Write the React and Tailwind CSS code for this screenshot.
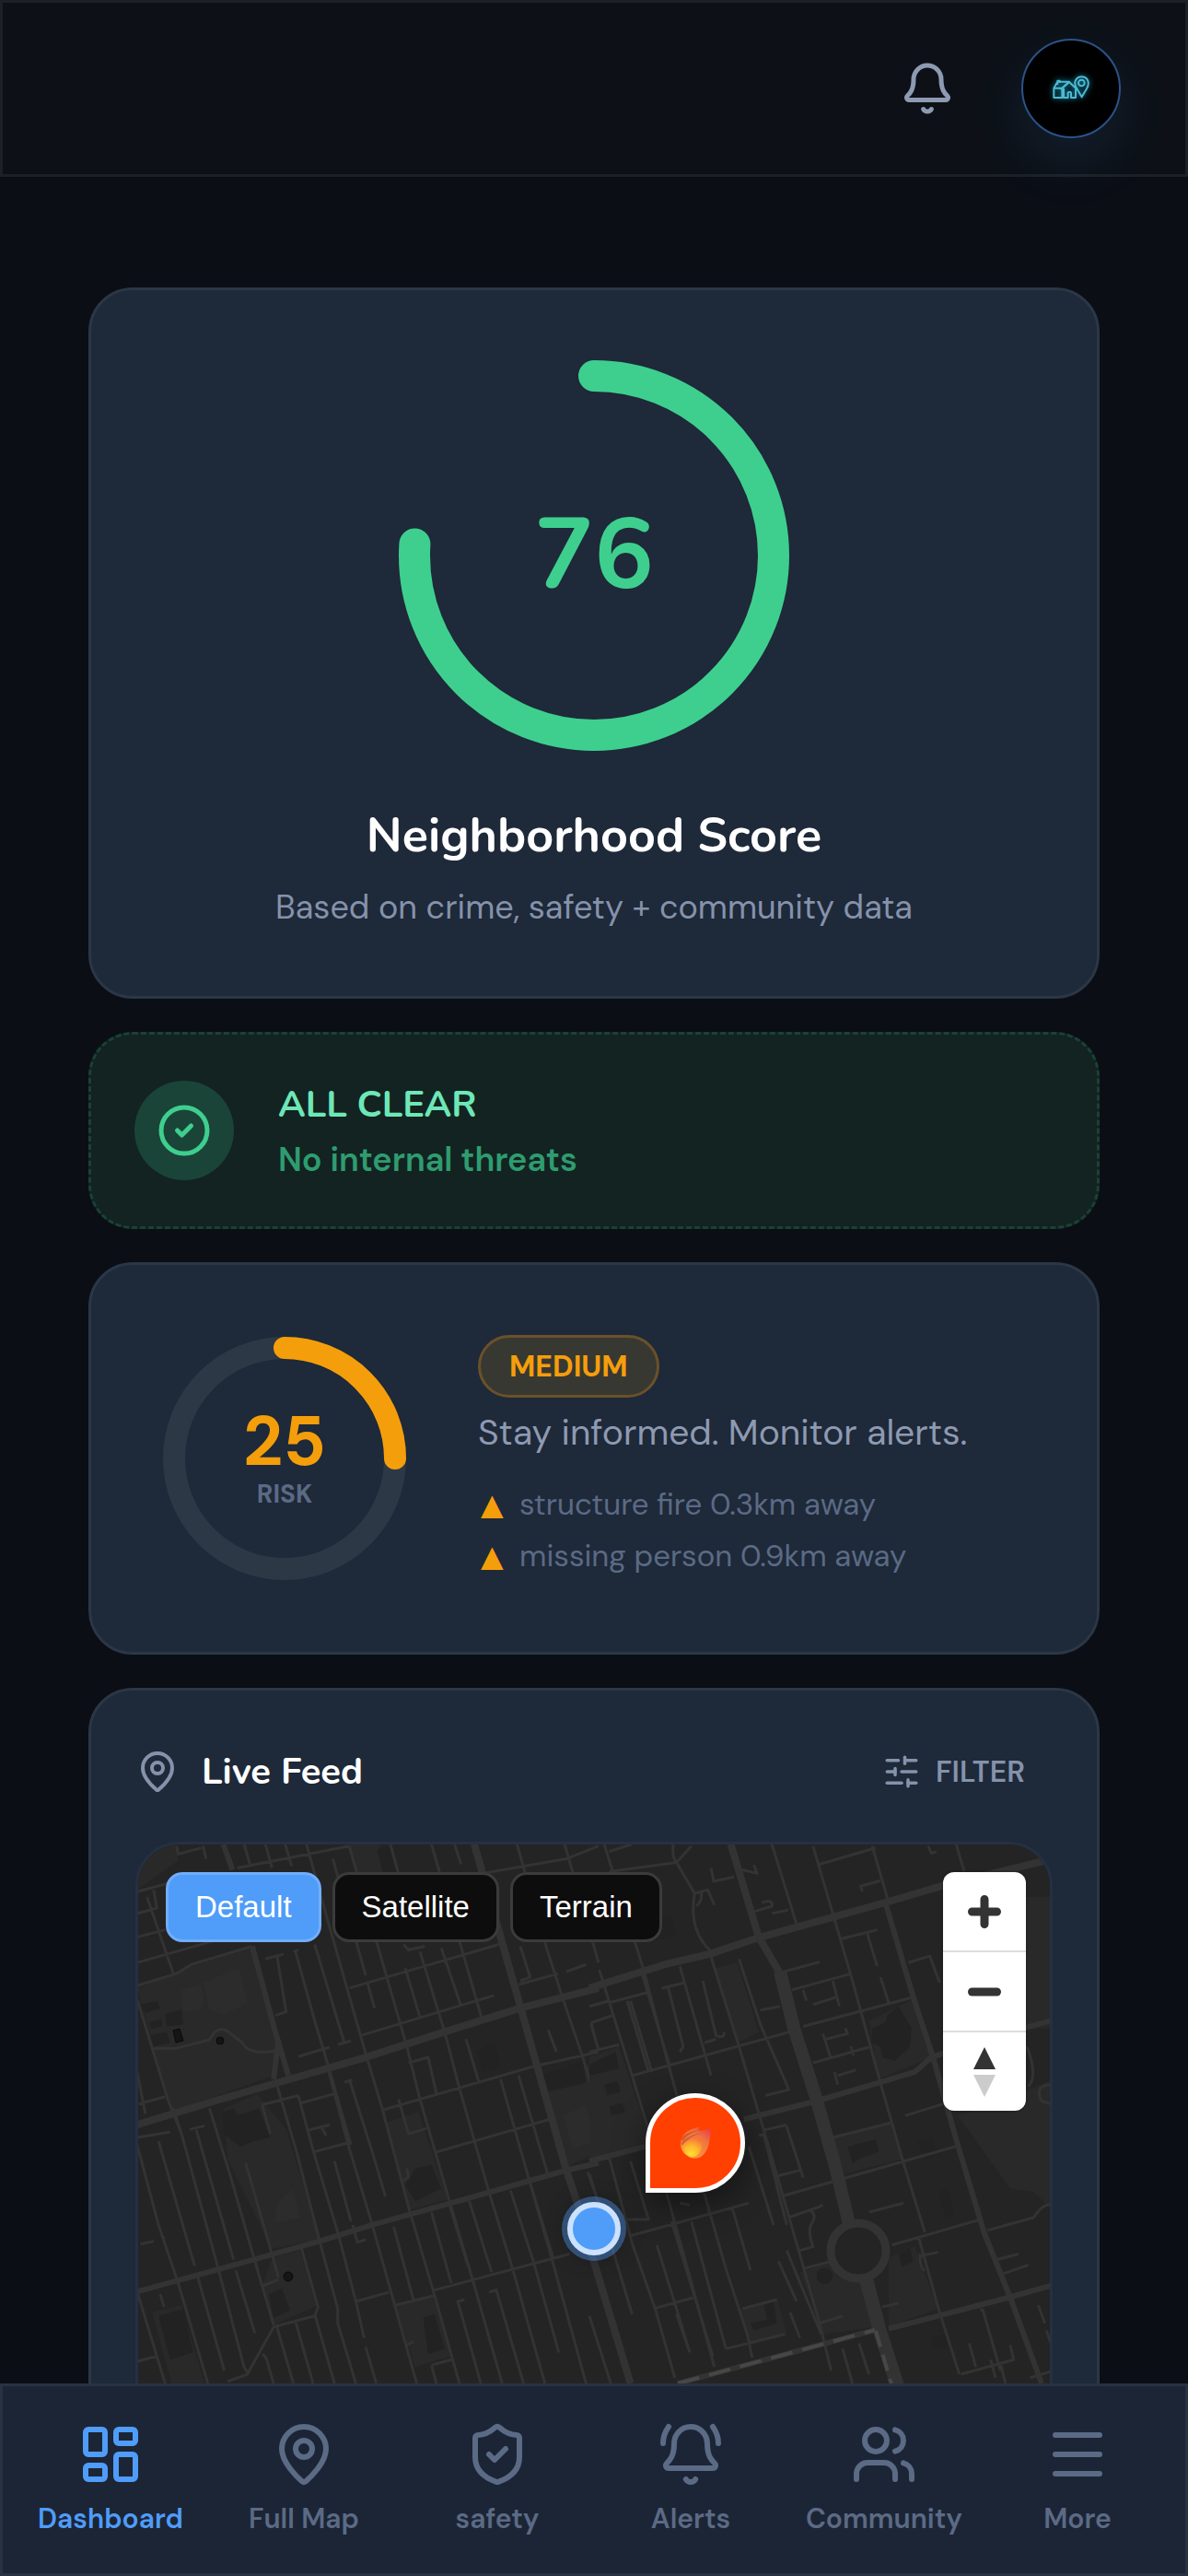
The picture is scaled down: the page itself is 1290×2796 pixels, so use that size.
import React, { useState } from 'react';
import {
  Bell,
  BellRing,
  CircleCheck,
  LayoutDashboard,
  MapPin,
  Menu,
  ShieldCheck,
  SlidersHorizontal,
  Users,
} from 'lucide-react';

const NAV_ITEMS = [
  { label: 'Dashboard', icon: LayoutDashboard },
  { label: 'Full Map', icon: MapPin },
  { label: 'safety', icon: ShieldCheck },
  { label: 'Alerts', icon: BellRing },
  { label: 'Community', icon: Users },
  { label: 'More', icon: Menu },
];

const MAP_STYLES = ['Default', 'Satellite', 'Terrain'];

const RISK_REASONS = ['structure fire 0.3km away', 'missing person 0.9km away'];

// Each tile has its own coordinate space, placed side by side in <MapCanvas />
const WEST_TILE = {
  parks: [
    'M165 450 L330 390 L515 340 L590 590 L580 690 L270 790 Z',
    'M430 780 L530 740 L620 840 L720 1140 L575 1165 L440 920 Z',
    'M575 1190 L660 1170 L715 1320 L580 1375 L545 1270 Z',
    'M920 820 L1020 790 L1110 1030 L990 1060 Z',
    'M950 1320 L1065 1300 L1120 1460 L1010 1490 Z',
    'M210 1340 L300 1320 L370 1535 L270 1535 Z',
    'M1400 700 L1568 650 V900 L1470 940 Z',
    'M810 55 H900 L925 150 L850 170 Z',
    'M165 55 H285 L290 100 L165 180 Z',
  ],
  buildings: [
    'M175 495 L225 485 L235 505 L190 518 Z M200 545 L238 535 L243 552 L210 562 Z M205 580 L255 570 L265 600 L215 610 Z M250 520 L300 510 L305 550 L255 555 Z',
    'M425 790 L460 780 L470 800 L535 780 L570 860 L520 870 L480 885 L450 865 L430 850 Z',
    'M980 990 L1010 945 L1060 935 L1090 1000 L1010 1035 Z',
    'M1035 1355 L1070 1345 L1100 1440 L1050 1455 Z',
    'M230 1350 L305 1330 L335 1450 L265 1470 Z',
    'M565 1290 L605 1275 L630 1335 L580 1355 Z',
    'M1395 690 L1520 650 L1530 710 L1410 735 Z',
    'M895 70 L930 60 L955 130 L915 145 Z M1200 620 L1250 600 L1270 665 L1215 680 Z',
  ],
  fields: [
    'M295 455 L360 438 L370 490 L350 512 L305 515 Z',
    'M365 435 L475 395 L500 490 L430 522 L385 510 Z',
    'M590 1040 L640 1000 L662 1080 L585 1095 Z',
    'M1460 800 L1530 770 L1560 870 L1490 890 Z',
  ],
  streets: [
    'M165 480 L260 760 L300 850 L410 1215',
    'M165 680 L190 795',
    'M165 880 L230 1100 L290 1260 L380 1535',
    'M230 870 L340 1213',
    'M345 840 L458 1195',
    'M275 780 L300 850',
    'M385 780 L450 970 L520 1190 L580 1375',
    'M495 930 L570 1165 L595 1245',
    'M590 360 L618 515 L585 525',
    'M555 370 L610 357 M640 350 L655 345',
    'M645 345 L705 540 L745 660 L815 880',
    'M705 330 L795 600',
    'M680 55 L740 250 L860 630 L910 780 L990 1050 L1065 1280 L1145 1535',
    'M590 715 L650 900 L720 1145 L775 1330 L775 1370 L830 1535',
    'M655 745 L700 895 L775 1120 L830 1310 L855 1410',
    'M745 670 L805 875 L880 1100 L945 1310 L1015 1535',
    'M810 700 L880 900 L920 1022',
    'M795 708 L820 702',
    'M810 60 L860 220 L985 610 L1025 755 L1110 1020 L1185 1250 L1275 1535',
    'M765 925 L815 1090',
    'M490 55 L508 110 M555 55 L575 120 M615 55 L635 115 M365 60 L375 95',
    'M760 95 L860 415 M865 435 L887 505',
    'M935 55 L970 170 M1130 55 L1150 110',
    'M1025 350 L1100 570 L1145 725 L1235 1010 L1305 1215 L1405 1535',
    'M980 395 L1025 530',
    'M1060 55 L1215 540',
    'M1090 340 L1150 500',
    'M1165 590 L1205 710',
    'M1270 700 L1355 970 L1425 1190 L1530 1535',
    'M1325 690 L1415 965',
    'M1320 55 L1410 340 L1460 480 L1520 640 L1560 760',
    'M1465 55 L1568 380',
    'M1330 335 L1360 420 L1330 430',
    'M350 1245 L430 1500',
    'M465 1225 L523 1397',
    'M410 1215 L490 1490 L500 1505',
    'M165 1283 L250 1535',
    'M235 1290 L247 1325',
    'M1060 1065 L1120 1260',
    'M1115 1045 L1170 1210',
    'M1175 1035 L1243 1230',
    'M1300 1005 L1370 1200',
    'M1360 985 L1430 1190',
    'M945 1105 L1005 1305',
    'M665 1165 L715 1325 L705 1350 L580 1380 L500 1510 L440 1530',
    'M590 1380 L640 1535 M645 1360 L700 1535 M705 1345 L765 1535',
    'M545 1455 Q560 1460 565 1490 L580 1535 M860 1435 L892 1535',
    'M1160 1305 L1140 1310 L1210 1535',
    'M1235 1285 L1257 1278 L1340 1535',
    'M1370 1200 L1447 1450',
    'M285 60 L290 82 L360 65',
    'M165 185 L360 138 M470 120 L810 60',
    'M165 245 L225 230 L215 180',
    'M165 310 L250 290 M165 380 L515 290',
    'M195 200 L275 410',
    'M165 443 L285 410 L330 385 L515 335',
    'M810 450 L1265 330 M975 330 L990 345 L1040 335',
    'M845 580 L1250 470',
    'M655 638 L750 612 M775 605 L815 595',
    'M1215 135 L1470 95 L1568 60',
    'M1325 440 L1445 410 M1470 405 L1530 385',
    'M910 785 L1370 665 L1568 625',
    'M960 755 L990 850 L1045 835',
    'M1075 900 L1420 810',
    'M665 765 L765 740 M685 840 L750 825 M725 830 L740 855',
    'M700 900 L805 875 M545 770 L655 745 M545 770 L570 850',
    'M830 1310 L930 1285 M950 1320 L1065 1295 M1065 1280 L1480 1180',
    'M165 1475 L225 1460 M175 1153 L215 1145 M240 1138 L250 1135',
    'M215 615 L285 615 L385 592 Q410 545 450 575 L485 600 Q505 635 585 622',
    'M165 860 L265 845 M325 838 L370 828 M170 768 L250 748',
    'M990 655 L1050 640 L1075 740',
    'M820 1100 L835 1148 L860 1140 M545 1268 L595 1250',
    'M970 980 L990 970 L985 945 M1060 1485 L1120 1470 M1060 1485 L1075 1535',
    'M1415 565 L1440 625 M1535 955 L1568 1040 M1545 550 L1568 620 M985 1430 L1005 1420',
  ],
  avenues: [
    'M165 1283 L400 1225 L720 1145 L880 1100 L1120 1040 L1470 950 L1568 930',
    'M515 335 L585 570 L625 690',
    'M427 55 L455 125',
    'M595 590 L580 700',
  ],
  highways: [
    'M165 825 L400 760 L590 710 L860 640 L1100 570 L1330 505 L1568 450',
    'M1190 55 L1330 500 L1470 950 L1500 1030 L1555 1160',
  ],
};

const EAST_TILE = {
  parks: [
    'M0 640 L90 610 L190 880 L0 920 Z',
    'M380 395 L450 380 L515 570 L450 600 Z',
    'M1120 800 L1260 760 L1410 700 V1060 L1350 1010 L1280 1000 Z',
    'M1240 200 H1410 V560 H1330 Z',
    'M740 860 L920 820 L950 920 L775 960 Z',
    'M640 1230 L740 1200 L790 1250 L840 1260 L870 1380 L710 1400 Z',
    'M850 540 L985 480 L1040 640 L880 700 Z',
    'M460 1330 L570 1300 L600 1400 L490 1430 Z',
    'M910 1190 L990 1160 L1060 1330 L910 1380 Z',
  ],
  buildings: [
    'M860 560 L900 545 L905 525 L940 500 L960 530 L980 560 L975 610 L930 650 L890 640 L885 610 L860 600 Z',
    'M785 885 L870 865 L880 900 L830 915 L800 930 Z',
    'M45 715 L85 705 L95 735 L55 745 Z M60 775 L100 765 L108 790 L68 800 Z',
    'M690 1240 A25 22 0 1 1 740 1240 A25 22 0 1 1 690 1240 Z',
    'M1040 1410 L1080 1400 L1090 1435 L1050 1440 Z M530 1320 L560 1310 L570 1370 L500 1390 L490 1370 L540 1360 Z',
    'M1000 870 L1040 860 L1060 900 L1020 920 Z M1060 1010 L1090 1000 L1110 1070 L1085 1080 Z M940 1180 L975 1165 L985 1200 L950 1215 Z',
    'M0 660 L80 625 L90 670 L0 690 Z M170 270 L250 250 L265 300 L200 320 Z',
  ],
  fields: [],
  streets: [
    'M45 55 L165 400 L240 660 L345 1000 L415 1220 L480 1400 L495 1465',
    'M30 400 L130 690 L200 900 L320 1290 L380 1490',
    'M160 410 L245 665',
    'M275 390 L370 690',
    'M370 365 L455 610 L550 900 L700 1370 L735 1500',
    'M345 430 L385 580 Q410 590 410 570',
    'M115 485 L180 680',
    'M455 370 L520 550 L605 725',
    'M555 55 L630 275',
    'M680 60 L745 260 L800 430 L885 710 L955 930 L1020 1120',
    'M860 60 L910 215',
    'M1115 55 L1140 130',
    'M1030 60 L1040 80 L1055 75',
    'M255 55 Q250 90 265 105 L320 190 Q300 290 370 350',
    'M265 105 L310 60 M60 75 L130 55 M60 130 L265 105',
    'M320 190 L360 180 L380 222 M325 225 Q345 210 340 185',
    'M370 120 L378 157 L440 145 M465 125 L510 135 L500 112',
    'M500 240 L555 225 Q560 205 525 215 M555 245 L605 235',
    'M700 110 L870 65',
    'M830 185 L825 170 L885 155',
    'M590 405 L700 378 M615 455 L790 412 M680 495 L750 475',
    'M650 555 L985 475 M680 655 L850 612',
    'M765 315 L875 290 M845 300 L875 390 M885 420 L910 490',
    'M740 430 L760 500 M650 455 L660 485',
    'M970 380 L1035 362 L1065 435 M520 510 L580 500',
    'M710 575 L735 645 M720 590 L785 575 L778 560 M795 610 L803 635',
    'M745 680 L755 715 M755 690 L810 675',
    'M5 545 L70 525 M5 545 L20 595 M0 625 L90 605',
    'M60 490 L185 460 M220 450 L290 435 M240 450 L285 610 L275 625',
    'M130 690 L610 570 M350 600 L385 590 M0 500 L60 485',
    'M125 485 L190 680 M535 745 L610 728',
    'M125 1130 L485 1040',
    'M590 1020 L1120 883 M740 860 L915 820 M960 800 L1075 768',
    'M575 965 L640 950 M605 1080 L700 1050 L710 1045',
    'M850 1065 L955 1040 M920 1155 L1190 1085',
    'M1210 1115 L1350 1080 Q1385 1035 1410 1045',
    'M1240 1195 L1305 1180 M1255 1235 L1335 1210 M890 1325 L940 1315',
    'M1000 1130 L1065 1340 L1125 1510',
    'M1005 1180 Q1005 1220 1020 1225 M1005 1185 L1060 1175',
    'M1130 1510 L1290 1470 L1280 1430',
    'M1195 1330 L1250 1500 M1155 1425 L1175 1490 M1220 1470 L1235 1520',
    'M1365 1320 L1385 1370 M1390 1390 L1405 1430 M1340 1520 L1410 1500',
    'M195 1330 L315 1300 M465 1330 L570 1305',
    'M415 1440 L595 1400 M650 1220 L735 1200 M700 1370 L770 1350',
    'M640 1170 L680 1160 Q660 1110 680 1090 Q690 1070 670 1060',
    'M600 830 L650 970 M515 855 L535 850 M530 840 L600 825',
    'M530 850 L600 1100 M600 1170 L705 1400 M575 1200 L630 1310 M610 1340 L640 1410',
    'M60 915 L130 1150 L200 1330 L260 1520',
    'M0 960 L55 1120 L130 1345',
    'M125 925 L180 1085 L115 1085',
    'M250 1090 L375 1460',
    'M205 1155 L265 1330 L305 1450',
    'M310 1090 L415 1440',
    'M435 1055 L490 1225',
    'M485 885 L560 1100',
    'M0 1350 L65 1535 M265 1345 L305 1450 M820 1425 L850 1510 M770 1440 L800 1535',
    'M1330 610 Q1365 690 1335 720 M1410 715 Q1350 715 1375 760 L1410 770',
    'M1190 1330 L1200 1340 M1250 1480 L1265 1535 M275 1040 L305 1045',
  ],
  avenues: [
    'M0 925 L170 885',
    'M470 810 L690 760 L880 710 L990 680 L1040 640 L1100 622',
    'M1320 560 L1410 538',
    'M900 215 L985 475 L1045 640 L1120 880 L1200 1120 L1280 1300 L1375 1535',
    'M910 1385 L1280 1298 L1410 1265',
    'M270 1535 L870 1388',
  ],
  highways: [
    'M0 450 L230 385 L370 355 L520 310 L740 255 L900 215 L1070 170 L1410 95',
    'M430 55 L515 310 L580 410',
    'M0 1160 L30 1250 L125 1535',
  ],
};

const Tile = ({ tile, transform }) => (
  <g transform={transform} fill="none" stroke="#333333" strokeLinejoin="round">
    <path d={tile.parks.join(' ')} fill="#292929" stroke="none" />
    <path d={tile.fields.join(' ')} fill="#2c2c2c" stroke="none" />
    <path d={tile.buildings.join(' ')} fill="#222222" stroke="none" />
    <path d={tile.streets.join(' ')} strokeWidth="3" vectorEffect="non-scaling-stroke" />
    <path d={tile.avenues.join(' ')} strokeWidth="6" vectorEffect="non-scaling-stroke" />
    <path d={tile.highways.join(' ')} strokeWidth="8" vectorEffect="non-scaling-stroke" />
  </g>
);

const MapCanvas = () => (
  <svg
    viewBox="0 0 990 760"
    preserveAspectRatio="xMidYMin slice"
    className="block h-[760px] w-full bg-[#242424]"
    aria-hidden="true"
  >
    <Tile tile={WEST_TILE} transform="matrix(0.3571 0 0 0.3954 -60 -22)" />
    <Tile tile={EAST_TILE} transform="matrix(0.3571 0 0 0.3954 490 -22)" />

    {/* boulevard + roundabout */}
    <g fill="none" stroke="#333333">
      <path d="M697 138 L712 199 L737 278 L758 353 L772 412" strokeWidth="14" />
      <path d="M790 470 L805 527 L824 586 L850 660" strokeWidth="15" />
      <circle cx="782" cy="441" r="30" strokeWidth="9" />
    </g>
    <g fill="none" stroke="#474747" strokeWidth="4" strokeDasharray="24 11">
      <path d="M586 585 L800 527" />
      <path d="M801 528 L818 586" strokeDasharray="18 9" />
    </g>

    {/* monuments */}
    <g fill="#151515" stroke="#0a0a0a">
      <path d="M38 202 L45 200 L49 213 L41 215 Z" />
      <circle cx="89" cy="213" r="4" />
      <circle cx="163" cy="469" r="5" />
    </g>
  </svg>
);

const Logo = () => (
  <svg
    viewBox="0 0 168 132"
    className="h-11 w-14 drop-shadow-[0_0_3px_#1499b8]"
    fill="none"
    stroke="#4fb9d3"
    strokeWidth="6"
    strokeLinejoin="round"
    aria-hidden="true"
  >
    <path d="M28 65 H55 V96 H28 Z" />
    <path d="M28 65 L40 44 H78 L55 65 M40 54 V41 H47 V48" />
    <path d="M50 70 L78 45 L104 70" />
    <path d="M60 66 V96 H74 V80 Q79 74 84 80 V96 H99 V68" />
    <path d="M119 94 L103 67 Q93 51 99 39 Q106 28 118 28 Q132 28 138 39 Q144 51 135 67 Z" />
    <circle cx="118" cy="48" r="10" />
  </svg>
);

const Flame = () => (
  <svg viewBox="0 0 108 112" className="h-9 w-9" aria-hidden="true">
    <defs>
      <linearGradient id="flameOuter" x1="1" y1="0" x2="0.3" y2="1">
        <stop offset="0" stopColor="#e5354b" />
        <stop offset="0.4" stopColor="#f0773f" />
        <stop offset="1" stopColor="#ff9a3c" />
      </linearGradient>
      <radialGradient id="flameInner" cx="0.45" cy="0.85" r="0.8">
        <stop offset="0" stopColor="#ffe02e" />
        <stop offset="0.5" stopColor="#ffb52e" />
        <stop offset="1" stopColor="#f5763a" />
      </radialGradient>
    </defs>
    <path
      d="M5 55 Q8 20 50 6 L68 1 L64 14 Q84 16 105 6 Q106 36 100 58 Q92 94 66 106 Q40 114 22 96 Q2 80 5 55 Z"
      fill="url(#flameOuter)"
    />
    <path d="M5 45 Q18 18 64 14 Q30 24 12 48 Z" fill="#d8572f" />
    <path d="M6 56 Q28 26 78 22 Q34 34 10 66 Z" fill="#d9603a" />
    <path d="M9 66 Q24 40 76 34 Q82 66 70 86 Q56 106 38 103 Q12 94 9 66 Z" fill="url(#flameInner)" />
  </svg>
);

// Circular gauge, the arc starts at 12 o'clock
const Ring = ({ value, size, stroke, color, track }) => {
  const r = (size - stroke) / 2;
  const c = 2 * Math.PI * r;
  return (
    <svg viewBox={`0 0 ${size} ${size}`} className="h-full w-full -rotate-90" fill="none" aria-hidden="true">
      {track && <circle cx={size / 2} cy={size / 2} r={r} stroke={track} strokeWidth={stroke} />}
      <circle
        cx={size / 2}
        cy={size / 2}
        r={r}
        stroke={color}
        strokeWidth={stroke}
        strokeLinecap="round"
        strokeDasharray={`${(c * value) / 100} ${c}`}
      />
    </svg>
  );
};

const Header = () => (
  <header className="flex h-48 shrink-0 items-center justify-end gap-[72px] border-3 border-[#1d2127] bg-[#0d1117] px-[70px]">
    <button type="button" aria-label="Notifications" className="text-[#8e9ab2]">
      <Bell size={60} />
    </button>
    <button
      type="button"
      aria-label="Profile"
      className="flex h-27 w-27 items-center justify-center rounded-full border-2 border-[#2b5288] bg-black shadow-[0_24px_60px_rgba(56,130,220,0.12)]"
    >
      <Logo />
    </button>
  </header>
);

const ScoreCard = () => (
  <section className="flex flex-col items-center rounded-[48px] border-3 border-[#2b3746] bg-[#1e2939] pt-[76px] pb-[70px]">
    <div className="relative h-106 w-106">
      <Ring value={76} size={424} stroke={34} color="#3ecf8e" />
      <div className="absolute inset-0 flex items-center justify-center">
        <span className="font-[Nunito,sans-serif] text-[108px] leading-[108px] font-bold text-[#3ecf8e]">76</span>
      </div>
    </div>
    <h2 className="mt-15 font-[Nunito,sans-serif] text-[52px] leading-16 font-bold text-white">
      Neighborhood Score
    </h2>
    <p className="mt-5 text-[36px] leading-13 text-[#8592ab]">Based on crime, safety + community data</p>
  </section>
);

const StatusCard = () => (
  <section className="flex items-center gap-12 rounded-[48px] border-3 border-dashed border-[#1a4234] bg-[#122322] px-[47px] py-11">
    <div className="flex h-27 w-27 items-center justify-center rounded-full bg-[#1b4438] text-[#3ecf8e]">
      <CircleCheck size={60} />
    </div>
    <div>
      <h3 className="pt-1 font-[Nunito,sans-serif] text-[40px] leading-14 font-bold text-[#6ee7b7]">ALL CLEAR</h3>
      <p className="mt-1 text-[36px] leading-14 font-semibold text-[#2f9c6f]">No internal threats</p>
    </div>
  </section>
);

const RiskCard = () => (
  <section className="flex items-center gap-[78px] rounded-[48px] border-3 border-[#2b3746] bg-[#1e2939] px-[78px] py-[76px]">
    <div className="relative h-66 w-66 shrink-0">
      <Ring value={25} size={264} stroke={24} color="#f59e0b" track="#2d3846" />
      <div className="absolute inset-0 flex flex-col items-center justify-center">
        <span className="text-[75px] leading-[78px] font-bold text-[#f59e0b]">25</span>
        <span className="text-[28px] leading-9 font-bold text-[#5b6a85]">RISK</span>
      </div>
    </div>
    <div className="flex flex-col items-start">
      <span className="rounded-full border-3 border-[#6b5129] bg-[#383832] px-[31px] py-3 text-[32px] leading-[38px] font-bold text-[#f59e0b]">
        MEDIUM
      </span>
      <p className="mt-2 text-[39px] leading-15 text-[#8e9ab2]">Stay informed. Monitor alerts.</p>
      <ul className="mt-5 text-[33px] leading-14 text-[#5b6a85]">
        {RISK_REASONS.map((reason) => (
          <li key={reason} className="flex">
            <span className="w-[45px] pl-[3px] font-['DejaVu_Sans',sans-serif] text-[32px] text-[#f59e0b]">▲</span>
            {reason}
          </li>
        ))}
      </ul>
    </div>
  </section>
);

const LiveFeed = () => {
  const [mapStyle, setMapStyle] = useState('Default');

  return (
    <section className="rounded-[48px] border-3 border-[#2b3746] bg-[#1e2939] p-12">
      <div className="mb-9 flex h-20 items-center justify-between">
        <div className="flex items-center gap-6">
          <MapPin size={48} className="text-[#8592ab]" />
          <h3 className="font-[Nunito,sans-serif] text-[40px] leading-14 font-bold text-white">Live Feed</h3>
        </div>
        <button type="button" className="flex items-center gap-4 px-[30px] text-[32px] font-semibold text-[#8592ab]">
          <SlidersHorizontal size={42} />
          FILTER
        </button>
      </div>

      <div className="relative overflow-hidden rounded-[48px] border-3 border-[#243142]">
        <MapCanvas />

        <div className="absolute top-[30px] left-[30px] flex gap-3">
          {MAP_STYLES.map((name) => (
            <button
              key={name}
              type="button"
              onClick={() => setMapStyle(name)}
              className={`rounded-[18px] border-3 px-[29px] py-3 font-['Liberation_Sans',Arial,sans-serif] text-[33px] leading-[46px] text-white ${
                mapStyle === name ? 'border-[#70aefb] bg-[#4f9cf9]' : 'border-[#3b3b3b] bg-[#0d0d0d]'
              }`}
            >
              {name}
            </button>
          ))}
        </div>

        <div className="absolute top-[30px] right-[26px] flex w-[90px] flex-col divide-y-2 divide-[#ddd] overflow-hidden rounded-xl bg-white shadow-[0_0_0_2px_rgba(0,0,0,0.1)]">
          <button type="button" aria-label="Zoom in" className="flex h-[87px] items-center justify-center">
            <svg viewBox="0 0 36 36" className="h-9 w-9" stroke="#333" strokeWidth="9" strokeLinecap="round">
              <path d="M18 4.5 V31.5 M4.5 18 H31.5" />
            </svg>
          </button>
          <button type="button" aria-label="Zoom out" className="flex h-[87px] items-center justify-center">
            <svg viewBox="0 0 36 36" className="h-9 w-9" stroke="#333" strokeWidth="9" strokeLinecap="round">
              <path d="M4.5 18 H31.5" />
            </svg>
          </button>
          <button type="button" aria-label="Reset bearing" className="flex h-[85px] items-center justify-center">
            <svg viewBox="0 0 24 54" className="h-[54px] w-6">
              <path d="M12 0 L24 24 H0 Z" fill="#333" />
              <path d="M12 54 L24 30 H0 Z" fill="#ccc" />
            </svg>
          </button>
        </div>

        <button
          type="button"
          aria-label="Structure fire"
          className="absolute top-[270px] left-[551px] flex h-27 w-27 items-center justify-center rounded-full rounded-bl-none border-5 border-white bg-[#ff4000] shadow-[0_12px_36px_rgba(0,0,0,0.45)]"
        >
          <Flame />
        </button>
        <div className="absolute top-[388px] left-1/2 h-[58px] w-[58px] -translate-x-1/2 rounded-full border-6 border-[#cbe1fd] bg-[#4f9cf9] shadow-[0_0_0_6px_rgba(79,156,249,0.4),0_0_24px_rgba(0,0,0,0.4)]" />
      </div>
    </section>
  );
};

const BottomNav = () => {
  const [active, setActive] = useState('Dashboard');

  return (
    <nav className="grid shrink-0 grid-cols-6 border-3 border-[#283242] bg-[#1c2535] px-3 pt-[38px] pb-[41px]">
      {NAV_ITEMS.map(({ label, icon: Icon }) => (
        <button
          key={label}
          type="button"
          onClick={() => setActive(label)}
          className={`flex flex-col items-center gap-4 text-[30px] leading-9 font-semibold ${
            active === label ? 'text-[#4f9cf9]' : 'text-[#5b6a85]'
          }`}
        >
          <Icon size={72} />
          {label}
        </button>
      ))}
    </nav>
  );
};

const App = () => (
  <div className="flex h-screen flex-col overflow-hidden bg-[#0b0e15] font-['DM_Sans',Inter,sans-serif]">
    <Header />
    <main className="flex min-h-0 flex-1 flex-col gap-9 overflow-y-auto px-24 pt-30 [scrollbar-width:none] *:shrink-0">
      <ScoreCard />
      <StatusCard />
      <RiskCard />
      <LiveFeed />
    </main>
    <BottomNav />
  </div>
);

export default App;
